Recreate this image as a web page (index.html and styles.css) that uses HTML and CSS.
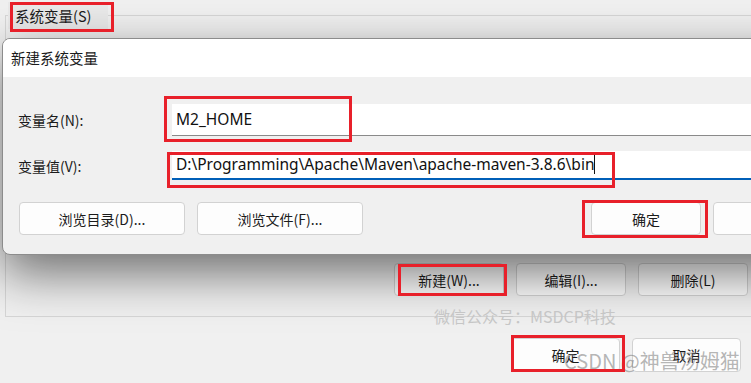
FILE: index.html
```html
<!DOCTYPE html>
<html lang="zh-CN">
<head>
    <meta charset="UTF-8">
    <title>新建系统变量</title>
    <link rel="stylesheet" href="styles.css">
</head>
<body>

    <!-- Environment variables window behind the dialog -->
    <div class="window">
        <div class="group">
            <div class="group-title">系统变量(S)</div>
            <div class="var-list"></div>
            <div class="list-actions">
                <button class="btn btn-small">新建(W)...</button>
                <button class="btn btn-small">编辑(I)...</button>
                <button class="btn btn-small">删除(L)</button>
            </div>
        </div>
        <div class="window-actions">
            <button class="btn btn-small">确定</button>
            <button class="btn btn-small">取消</button>
        </div>
    </div>

    <!-- New variable dialog -->
    <div class="dialog">
        <div class="dialog-title">新建系统变量</div>
        <div class="dialog-body">
            <div class="field-row">
                <label class="field-label">变量名(N):</label>
                <div class="field-input">M2_HOME</div>
            </div>
            <div class="field-row">
                <label class="field-label">变量值(V):</label>
                <div class="field-input active">D:\Programming\Apache\Maven\apache-maven-3.8.6\bin<span class="caret"></span></div>
            </div>
            <div class="dialog-actions">
                <button class="btn btn-wide">浏览目录(D)...</button>
                <button class="btn btn-wide">浏览文件(F)...</button>
                <span class="spacer"></span>
                <button class="btn btn-mid">确定</button>
                <button class="btn btn-mid">取消</button>
            </div>
        </div>
    </div>

    <!-- Watermarks -->
    <div class="watermark wm-wechat">微信公众号：MSDCP科技</div>
    <div class="watermark wm-csdn">CSDN @神兽汤姆猫</div>

    <!-- Red annotation boxes -->
    <div class="mark mark-title"></div>
    <div class="mark mark-name"></div>
    <div class="mark mark-value"></div>
    <div class="mark mark-ok"></div>
    <div class="mark mark-new"></div>
    <div class="mark mark-final"></div>

</body>
</html>
```

FILE: styles.css
```css
body {
    margin: 0;
    width: 751px;
    height: 383px;
    overflow: hidden;
    position: relative;
    background: #f0f0f0;
    font-family: "Noto Sans CJK SC", "Noto Sans", sans-serif;
    font-size: 14px;
    color: #1b1b1b;
}

/* background window */
.window { padding-top: 15px; }
.group {
    margin-left: 5px;
    height: 302px;
    border: 1px solid #d6d6d6;
    border-right: none;
    box-sizing: border-box;
    display: flex;
    flex-direction: column;
}
.group-title {
    margin: -14px 0 0 2px;
    width: 100px;
    height: 27px;
    line-height: 27px;
    padding-left: 7px;
    box-sizing: border-box;
    background: #e9e9e9;
    font-size: 14.5px;
}
.var-list { flex: 1; }
.list-actions {
    display: flex;
    justify-content: flex-end;
    gap: 12px;
    padding: 0 3px 20px 0;
}
.window-actions {
    display: flex;
    justify-content: flex-end;
    gap: 12px;
    padding: 21px 10px 0 0;
}

.btn {
    flex-shrink: 0;
    font-family: inherit;
    font-size: 14px;
    color: #1b1b1b;
    background: #fdfdfd;
    border: 1px solid #d2d2d2;
    border-radius: 4px;
    padding: 0;
    height: 33px;
}
.btn-small { width: 110px; }
.btn-wide { width: 166px; }
.btn-mid { width: 110px; }
.window-actions .btn { height: 34px; width: 109px; }

/* dialog */
.dialog {
    position: absolute;
    left: 2px;
    top: 38px;
    width: 860px;
    height: 217px;
    background: #f0f0f0;
    border: 1px solid #8c8c8c;
    border-radius: 8px 0 0 8px;
    overflow: hidden;
    box-sizing: border-box;
    box-shadow: 0 18px 50px rgba(0, 0, 0, 0.55);
}
.dialog-title {
    height: 38px;
    line-height: 38px;
    padding-left: 8px;
    background: #fff;
    font-size: 14.5px;
}
.dialog-body { padding: 27px 0 0 15px; }
.field-row {
    display: flex;
    align-items: center;
    margin-bottom: 15px;
}
.field-label { width: 154px; flex-shrink: 0; }
.field-input {
    flex: 1;
    height: 32px;
    line-height: 31px;
    padding-left: 4px;
    background: #fff;
    border-bottom: 1px solid #8a8a8a;
    box-sizing: border-box;
    font-family: "Noto Sans", sans-serif;
    font-size: 15.5px;
    color: #111;
    white-space: nowrap;
}
.field-input.active {
    height: 29px;
    line-height: 27px;
    border-bottom: 2px solid #005fb8;
}
.caret {
    display: inline-block;
    width: 1px;
    height: 19px;
    background: #111;
    vertical-align: -4px;
}
.dialog-actions {
    display: flex;
    gap: 12px;
    margin-top: 22px;
    padding-left: 1px;
}
.spacer { width: 204px; flex-shrink: 0; }

/* watermarks */
.watermark { position: absolute; white-space: nowrap; }
.wm-wechat {
    left: 434px;
    top: 304px;
    font-size: 16px;
    color: #c6c6c6;
}
.wm-csdn {
    left: 564px;
    top: 346px;
    font-size: 20px;
    color: rgba(120, 120, 120, 0.55);
}

/* annotations */
.mark {
    position: absolute;
    border: 3px solid #e8202a;
    box-sizing: border-box;
}
.mark-title { left: 10px; top: 2px; width: 104px; height: 30px; }
.mark-name { left: 164px; top: 96px; width: 188px; height: 46px; }
.mark-value { left: 167px; top: 152px; width: 448px; height: 36px; }
.mark-ok { left: 582px; top: 200px; width: 126px; height: 38px; }
.mark-new { left: 398px; top: 264px; width: 109px; height: 32px; }
.mark-final { left: 511px; top: 335px; width: 114px; height: 37px; }
```
